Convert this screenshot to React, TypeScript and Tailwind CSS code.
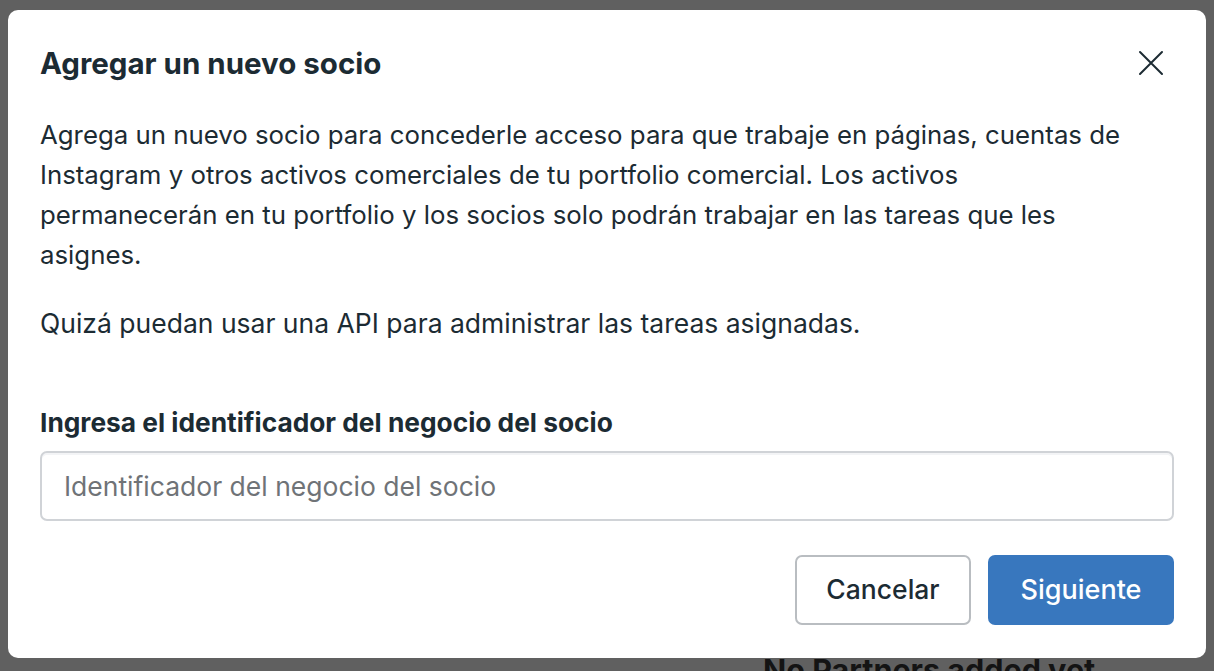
import React from 'react';

function CloseIcon() {
  return (
    <svg width="26" height="26" viewBox="0 0 26 26" fill="none" stroke="#1c2b33" strokeWidth="2" strokeLinecap="round">
      <path d="M2 2 L24 24 M24 2 L2 24" />
    </svg>
  );
}

export default function App() {
  return (
    <div className="relative h-screen w-full overflow-hidden bg-[#606060] font-['Inter',sans-serif] text-[#1c2b33]">
      {/* page behind the overlay */}
      <div className="pt-[650px] pl-[763px]">
        <p className="text-[30.5px] font-bold leading-[40px] text-[#141414] whitespace-nowrap">No Partners added yet</p>
      </div>

      {/* modal */}
      <div className="absolute left-[8px] top-[10px] w-[1198px] h-[648px] rounded-[10px] bg-white px-[32px] flex flex-col">
        <div className="flex items-center justify-between pt-[35px]">
          <h2 className="text-[29.5px] font-bold leading-[36px]">Agregar un nuevo socio</h2>
          <button className="mr-[10px] w-[26px] h-[26px] flex items-center justify-center">
            <CloseIcon />
          </button>
        </div>

        <div className="mt-[34px] text-[25.8px] leading-[40px] whitespace-nowrap">
          <p>
            Agrega un nuevo socio para concederle acceso para que trabaje en páginas, cuentas de
            <br />
            Instagram y otros activos comerciales de tu portfolio comercial. Los activos
            <br />
            permanecerán en tu portfolio y los socios solo podrán trabajar en las tareas que les
            <br />
            asignes.
          </p>
          <p className="mt-[28px] text-[26.5px]">Quizá puedan usar una API para administrar las tareas asignadas.</p>
        </div>

        <label className="mt-[62px] text-[26.3px] font-bold leading-[36px]">Ingresa el identificador del negocio del socio</label>
        <input
          className="mt-[10px] h-[70px] w-full rounded-[7px] border-2 border-[#d0d3d7] bg-white px-[22px] text-[26.5px] text-[#1c2b33] placeholder:text-[#6f7377] shadow-[inset_0_2px_0_#f3f4f6] outline-none"
          placeholder="Identificador del negocio del socio"
        />

        <div className="mt-[34px] flex justify-end gap-[17px]">
          <button className="h-[70px] w-[176px] rounded-[7px] border-2 border-[#b9bdc1] bg-white text-[26.5px] font-medium text-[#1c2b33]">
            Cancelar
          </button>
          <button className="h-[70px] w-[186px] rounded-[7px] bg-[#3877be] text-[27px] font-medium text-white">
            Siguiente
          </button>
        </div>
      </div>
    </div>
  );
}
